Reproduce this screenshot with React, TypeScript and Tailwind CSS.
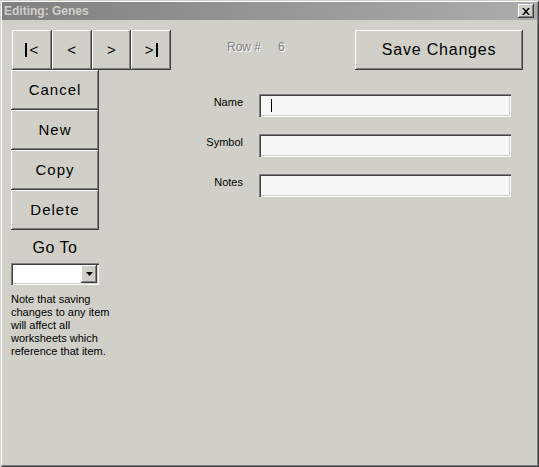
import React from 'react';

const raised =
  'bg-[#d0d0c8] shadow-[inset_-1px_-1px_#404040,inset_1px_1px_#ffffff,inset_-2px_-2px_#808080]';
const sunken =
  'shadow-[inset_1px_1px_#808080,inset_2px_2px_#404040,inset_-1px_-1px_#ffffff,inset_-2px_-2px_#d0d0c8]';

function Bar() {
  return <span className="inline-block w-[2px] h-[14px] bg-black" />;
}

function NavButton({ left, right, text }: { left?: boolean; right?: boolean; text: string }) {
  return (
    <button className={`${raised} w-[40px] h-[40px] flex items-center justify-center gap-[2px] text-[15px] text-black`}>
      {left && <Bar />}
      <span className="leading-none mb-[1px]">{text}</span>
      {right && <Bar />}
    </button>
  );
}

function SideButton({ label }: { label: string }) {
  return (
    <button className={`${raised} w-[88px] h-[40px] flex items-center justify-center text-[15px] tracking-[1px] text-black`}>
      {label}
    </button>
  );
}

function Field({ label, focused }: { label: string; focused?: boolean }) {
  return (
    <div className="flex items-start">
      <div className="w-[72px] text-right text-[11px] leading-[13px] mt-[2px] text-black">{label}</div>
      <div className={`${sunken} ml-[16px] w-[252px] h-[23px] bg-[#f7f7f7] flex items-center`}>
        {focused && <div className="ml-[12px] w-px h-[13px] bg-black" />}
      </div>
    </div>
  );
}

export default function App() {
  return (
    <div
      className="w-[539px] h-[467px] bg-[#d0d0c8] p-[2px] shadow-[inset_1px_1px_#d0d0c8,inset_-1px_-1px_#404040,inset_2px_2px_#ffffff,inset_-2px_-2px_#808080]"
      style={{ fontFamily: '"Liberation Sans", Arial, sans-serif' }}
    >
      {/* title bar */}
      <div className="h-[18px] bg-gradient-to-r from-[#808080] to-[#acacac] flex items-center justify-between pl-[2px] pr-[3px]">
        <span className="text-[12px] font-bold text-[#d0d0c8]">Editing: Genes</span>
        <button className={`${raised} w-[16px] h-[14px] flex items-center justify-center`}>
          <svg width="8" height="7" viewBox="0 0 8 7">
            <path d="M0 0h2l2 2.5L6 0h2L5 3.5 8 7H6L4 4.5 2 7H0l3-3.5z" fill="#000" />
          </svg>
        </button>
      </div>

      <div className="flex pt-[10px] pl-[9px]">
        {/* left column */}
        <div className="w-[160px] flex flex-col">
          <div className="flex ml-px">
            <NavButton left text="<" />
            <NavButton text="<" />
            <NavButton text=">" />
            <NavButton right text=">" />
          </div>
          <SideButton label="Cancel" />
          <SideButton label="New" />
          <SideButton label="Copy" />
          <SideButton label="Delete" />
          <div className="w-[88px] text-center text-[16px] tracking-[0.5px] text-black mt-[8px] leading-[20px]">Go To</div>
          <div className={`${sunken} mt-[5px] w-[88px] h-[22px] bg-white flex items-center justify-end pr-[2px]`}>
            <div className={`${raised} w-[16px] h-[18px] flex items-center justify-center`}>
              <svg width="7" height="4" viewBox="0 0 7 4">
                <path d="M0 0h7L3.5 4z" fill="#000" />
              </svg>
            </div>
          </div>
          <p className="mt-[8px] text-[11px] leading-[13px] text-black w-[110px]">
            Note that saving
            <br />
            changes to any item
            <br />
            will affect all
            <br />
            worksheets which
            <br />
            reference that item.
          </p>
        </div>

        {/* right column */}
        <div className="flex-1 flex flex-col">
          <div className="flex items-start">
            <span className="ml-[56px] mt-[8px] text-[12px] text-[#808080] text-shadow-[1px_1px_0_#ffffff]">Row #</span>
            <span className="ml-[17px] mt-[8px] text-[12px] text-[#808080] text-shadow-[1px_1px_0_#ffffff]">6</span>
            <button className={`${raised} ml-auto mr-[14px] w-[168px] h-[40px] flex items-center justify-center text-[16px] tracking-[0.8px] text-black`}>
              Save Changes
            </button>
          </div>
          <div className="mt-[24px] flex flex-col gap-[17px]">
            <Field label="Name" focused />
            <Field label="Symbol" />
            <Field label="Notes" />
          </div>
        </div>
      </div>
    </div>
  );
}
